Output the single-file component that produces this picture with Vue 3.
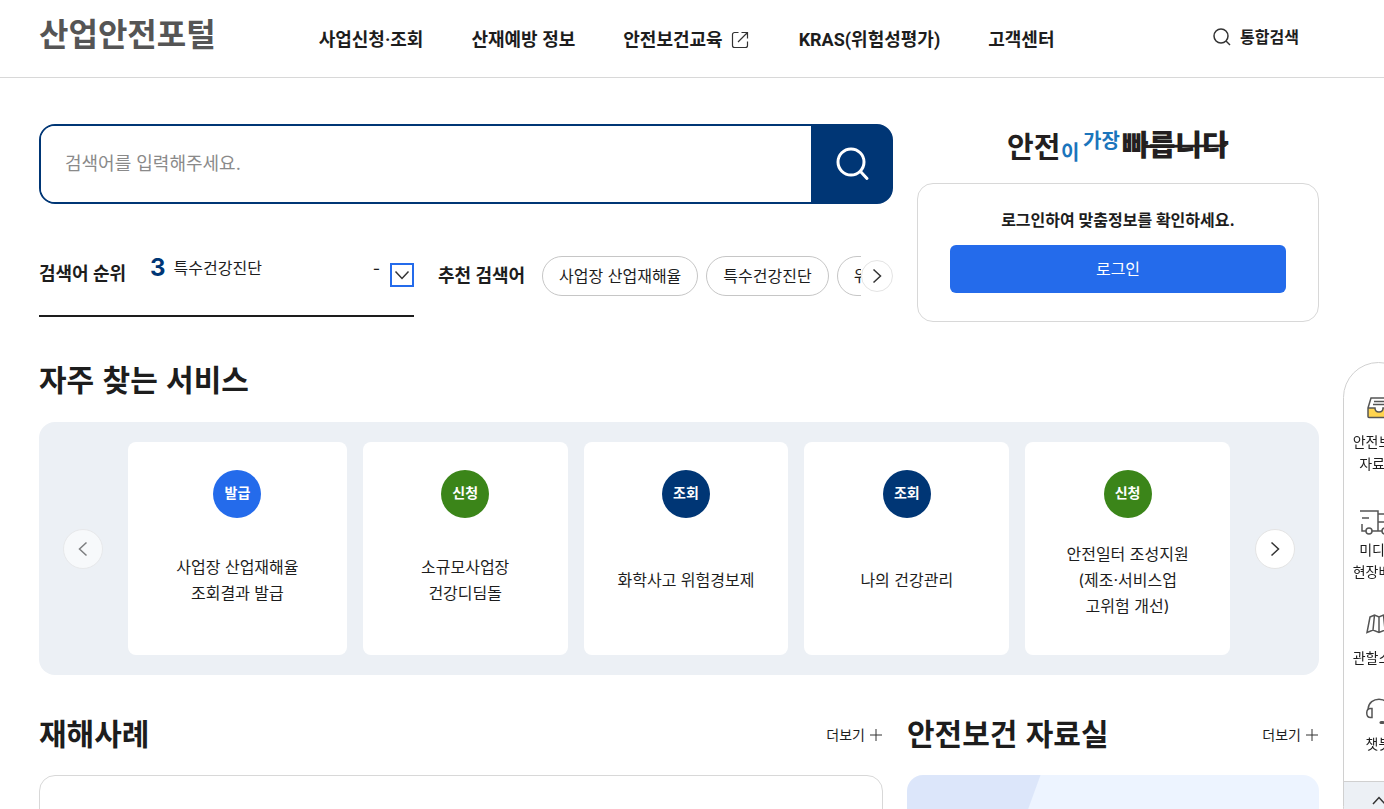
<template>
  <div class="page">
    <header class="header">
      <a class="logo" href="#">산업안전포털</a>
      <nav class="nav">
        <a v-for="item in menu" :key="item.label" href="#" class="nav-link">
          {{ item.label }}
          <svg v-if="item.external" width="20" height="20" viewBox="0 0 20 20" aria-hidden="true">
            <path d="M7.500 2.500H3.500A2 2 0 0 0 1.500 4.500V15.500A2 2 0 0 0 3.500 17.500H14.500A2 2 0 0 0 16.500 15.500V11.500M10.500 2.500H16.500V8.500M16.500 2.500L7 12" />
          </svg>
        </a>
      </nav>
      <button class="total-search" type="button">
        <svg width="20" height="20" viewBox="0 0 20 20" aria-hidden="true">
          <circle cx="9" cy="9" r="7" />
          <path d="M14 14L18 18" />
        </svg>
        통합검색
      </button>
    </header>

    <main class="main">
      <section class="top">
        <div class="top-left">
          <form class="search" @submit.prevent>
            <input v-model="keyword" type="text" placeholder="검색어를 입력해주세요." aria-label="검색어" />
            <button type="submit" aria-label="검색">
              <svg width="40" height="40" viewBox="0 0 40 40" aria-hidden="true">
                <circle cx="20" cy="18" r="13" />
                <path d="M29.500 27.500L36 34.500" />
              </svg>
            </button>
          </form>
          <div class="keywords">
            <div class="rank">
              <strong class="rank-title">검색어 순위</strong>
              <div class="rank-item">
                <b>3</b>
                <a href="#">특수건강진단</a>
                <span>-</span>
              </div>
              <button class="rank-toggle" type="button" aria-label="순위 펼치기">
                <svg width="20" height="20" viewBox="0 0 20 20" aria-hidden="true"><path d="M3.500 6.500L10 13.500L16.500 6.500" /></svg>
              </button>
            </div>
            <div class="recommend">
              <strong>추천 검색어</strong>
              <div class="chips">
                <a v-for="chip in chips" :key="chip" href="#" class="chip">{{ chip }}</a>
              </div>
              <button class="round small" type="button" aria-label="다음 검색어">
                <svg width="20" height="20" viewBox="0 0 20 20" aria-hidden="true"><path d="M6.500 3.500L13.500 10L6.500 16.500" /></svg>
              </button>
            </div>
          </div>
        </div>

        <div class="top-right">
          <svg class="slogan" width="222" height="36" viewBox="0 0 222 36" role="img" aria-label="안전이 가장 빠릅니다">
            <text class="black" x="0" y="30" font-size="29">안전</text>
            <text class="blue" x="54" y="32" font-size="20">이</text>
            <text class="blue" x="76" y="20" font-size="20">가장</text>
            <text class="black heavy" x="115" y="28" font-size="29">빠릅니다</text>
            <path d="M138 17L221 16.500L218 19L138 20Z" />
          </svg>
          <div class="login">
            <p>로그인하여 맞춤정보를 확인하세요.</p>
            <button type="button">로그인</button>
          </div>
        </div>
      </section>

      <section class="services">
        <h2>자주 찾는 서비스</h2>
        <div class="slider">
          <button class="round" type="button" disabled aria-label="이전">
            <svg width="20" height="20" viewBox="0 0 20 20" aria-hidden="true"><path d="M13.500 3.500L6.500 10L13.500 16.500" /></svg>
          </button>
          <div class="cards">
            <a v-for="service in services" :key="service.lines[0]" href="#" class="card">
              <span class="badge" :class="service.type">{{ service.badge }}</span>
              <span class="card-text">
                <span v-for="line in service.lines" :key="line">{{ line }}</span>
              </span>
            </a>
          </div>
          <button class="round" type="button" aria-label="다음">
            <svg width="20" height="20" viewBox="0 0 20 20" aria-hidden="true"><path d="M6.500 3.500L13.500 10L6.500 16.500" /></svg>
          </button>
        </div>
      </section>

      <div class="boards">
        <section v-for="board in boards" :key="board.title">
          <div class="board-head">
            <h2>{{ board.title }}</h2>
            <a href="#" class="more">
              더보기
              <svg width="14" height="14" viewBox="0 0 14 14" aria-hidden="true"><path d="M7 1V13M1 7H13" /></svg>
            </a>
          </div>
          <div class="board-box" :class="board.type"></div>
        </section>
      </div>
    </main>

    <aside class="quick">
      <div class="quick-list">
        <a href="#">
          <svg width="32" height="32" viewBox="0 0 32 32" aria-hidden="true">
            <path class="yellow" d="M5 16H12C12 19 14 20 16 20S20 19 20 16H27V25H5Z" />
            <path d="M5 16L8 6H24L27 16V24.500Q27 25.500 26 25.500H6Q5 25.500 5 24.500ZM5 16H12C12 19 14 20 16 20S20 19 20 16H27M11 9.500H21M10 12.500H22" />
          </svg>
          <span>안전보건</span><span>자료실</span>
        </a>
        <a href="#">
          <svg width="40" height="32" viewBox="0 0 40 32" aria-hidden="true">
            <path d="M1 11H19V31H13M3 18H10M3 24V31H7M19 14H28L34 22V31H29M19 22H33M19 31H23" />
            <circle cx="10" cy="31" r="3" />
            <circle cx="26" cy="31" r="3" />
          </svg>
          <span>미디어</span><span>현장배송</span>
        </a>
        <a href="#">
          <svg width="32" height="32" viewBox="0 0 32 32" aria-hidden="true">
            <path d="M7 9L11.500 7L16 9L20.500 7L25 9L28 23.500L22 22L16 24.500L10 22L4 24.500ZM11.500 7L10 22M16 9V24.500M20.500 7L22 22" />
          </svg>
          <span>관할소속</span>
        </a>
        <a href="#">
          <svg width="32" height="32" viewBox="0 0 32 32" aria-hidden="true">
            <path d="M5 15C6 2 26 2 27 15M7.500 14.500C2.500 14.500 2.500 23.500 7.500 23.500H9V14.500ZM24.500 14.500C29.500 14.500 29.500 23.500 24.500 23.500H23V14.500ZM26 23.500Q25 28.500 20 28.500" />
            <path class="mic" d="M18 28.500H20" />
          </svg>
          <span>챗봇</span>
        </a>
      </div>
      <button class="to-top" type="button" aria-label="맨 위로">
        <svg width="20" height="20" viewBox="0 0 20 20" aria-hidden="true"><path d="M4 13L10 6.500L16 13" /></svg>
      </button>
    </aside>
  </div>
</template>

<script setup>
import { ref } from 'vue';

const keyword = ref('');

const menu = [
  { label: '사업신청·조회' },
  { label: '산재예방 정보' },
  { label: '안전보건교육', external: true },
  { label: 'KRAS(위험성평가)' },
  { label: '고객센터' }
];

const chips = ['사업장 산업재해율', '특수건강진단', '위험성평가'];

const services = [
  { badge: '발급', type: 'issue', lines: ['사업장 산업재해율', '조회결과 발급'] },
  { badge: '신청', type: 'apply', lines: ['소규모사업장', '건강디딤돌'] },
  { badge: '조회', type: 'view', lines: ['화학사고 위험경보제'] },
  { badge: '조회', type: 'view', lines: ['나의 건강관리'] },
  { badge: '신청', type: 'apply', lines: ['안전일터 조성지원', '(제조·서비스업', '고위험 개선)'] }
];

const boards = [
  { title: '재해사례', type: 'outline' },
  { title: '안전보건 자료실', type: 'filled' }
];
</script>

<style>
body {
  margin: 0;
}
</style>

<style scoped>
.page {
  height: 100vh;
  overflow: hidden;
  background: #fff;
  color: #1d1d1d;
  font-family: Inter, "Noto Sans CJK KR", sans-serif;
  font-size: 16px;
  line-height: 26px;
}
.page * {
  box-sizing: border-box;
}
a {
  color: inherit;
  text-decoration: none;
}
button, input {
  font: inherit;
  color: inherit;
}
button {
  padding: 0;
  border: 0;
  cursor: pointer;
}
svg {
  display: block;
  flex: none;
  fill: none;
  stroke: #333;
  stroke-width: 1.5;
}
h2 {
  margin: 0;
  font-family: "Liberation Sans", "Noto Sans CJK KR", sans-serif;
  font-size: 30px;
  line-height: 40px;
  font-weight: 700;
}
.header {
  display: flex;
  align-items: center;
  height: 78px;
  padding: 0 85px 0 39px;
  border-bottom: 1px solid #d8d8d8;
}
.logo {
  padding-bottom: 8px;
  font-size: 32px;
  line-height: 40px;
  font-weight: 700;
  color: #555;
}
.nav {
  display: flex;
  gap: 48px;
  flex: 1;
  margin-left: 103px;
  padding-top: 2px;
  font-family: Roboto, "Noto Sans CJK KR", sans-serif;
  font-size: 18px;
  font-weight: 700;
  white-space: nowrap;
}
.nav-link {
  display: flex;
  align-items: center;
  gap: 8px;
}
.nav-link svg {
  stroke-width: 1.2;
}
.total-search {
  display: flex;
  align-items: center;
  gap: 8px;
  padding-bottom: 4px;
  background: none;
  font-weight: 700;
}
.main {
  padding: 46px 65px 0 39px;
}
.top {
  display: flex;
  gap: 24px;
}
.top-left {
  flex: 1;
  min-width: 0;
}
.search {
  display: flex;
  height: 80px;
  border: 2px solid #003675;
  border-radius: 16px;
  background: linear-gradient(to left, #003675 40px, #fff 40px);
  overflow: hidden;
}
.search input {
  flex: 1;
  min-width: 0;
  padding: 0 24px;
  border: 0;
  outline: none;
  font-size: 18px;
}
.search input::placeholder {
  color: #8a8a8a;
}
.search button {
  display: flex;
  align-items: center;
  justify-content: center;
  width: 80px;
  background: #003675;
}
.search svg {
  stroke: #fff;
  stroke-width: 3;
  stroke-linecap: round;
}
.keywords {
  display: flex;
  gap: 24px;
  margin-top: 31px;
}
.rank {
  display: flex;
  align-items: center;
  flex: none;
  width: 375px;
  height: 82px;
  border-bottom: 2px solid #1d1d1d;
}
.rank-title {
  padding-bottom: 2px;
  font-size: 18px;
}
.rank-item {
  display: flex;
  align-items: center;
  gap: 8px;
  flex: 1;
  padding: 0 10px 14px 24px;
}
.rank-item b {
  font-size: 24px;
  color: #003675;
}
.rank-item span {
  margin-left: auto;
}
.rank-toggle {
  display: flex;
  align-items: center;
  justify-content: center;
  width: 24px;
  height: 24px;
  background: #fff;
  border: 2px solid #246beb;
}
.recommend {
  display: flex;
  align-items: center;
  flex: 1;
  min-width: 0;
}
.recommend strong {
  flex: none;
  margin-right: 17px;
  font-size: 18px;
}
.chips {
  display: flex;
  gap: 8px;
  flex: 1;
  min-width: 0;
  overflow: hidden;
}
.chip {
  flex: none;
  padding: 6px 16px;
  border: 1px solid #c6c6c6;
  border-radius: 20px;
}
.round {
  display: flex;
  align-items: center;
  justify-content: center;
  flex: none;
  width: 40px;
  height: 40px;
  background: #fff;
  border: 1px solid #e4e4e4;
  border-radius: 50%;
}
.round:disabled {
  opacity: 0.6;
  cursor: default;
}
.round.small {
  width: 32px;
  height: 32px;
}
.top-right {
  width: 402px;
}
.slogan {
  margin: 4px auto 19px;
  stroke: none;
  font-weight: 700;
  overflow: visible;
}
.slogan .black, .slogan path {
  fill: #231f20;
}
.slogan .heavy {
  font-weight: 900;
}
.slogan .blue {
  fill: #1b75bc;
}
.login {
  padding: 23px 32px 28px;
  border: 1px solid #d8d8d8;
  border-radius: 16px;
  text-align: center;
}
.login p {
  margin: 0 0 12px;
  font-weight: 700;
}
.login button {
  width: 100%;
  height: 48px;
  background: #246beb;
  border-radius: 6px;
  color: #fff;
}
.services {
  margin-top: 39px;
}
.slider {
  display: flex;
  align-items: center;
  gap: 25px;
  margin-top: 21px;
  padding: 20px 24px;
  background: #ecf0f5;
  border-radius: 16px;
}
.cards {
  display: grid;
  grid-template-columns: 219fr repeat(4, 205fr);
  gap: 16px;
  flex: 1;
}
.card {
  display: flex;
  flex-direction: column;
  align-items: center;
  min-height: 213px;
  padding: 28px 16px 14px;
  background: #fff;
  border-radius: 8px;
}
.badge {
  width: 48px;
  height: 48px;
  border-radius: 50%;
  color: #fff;
  font-size: 14px;
  line-height: 46px;
  font-weight: 700;
  text-align: center;
}
.badge.issue {
  background: #246beb;
}
.badge.apply {
  background: #3b8519;
}
.badge.view {
  background: #003675;
}
.card-text {
  display: flex;
  flex-direction: column;
  justify-content: center;
  flex: 1;
  text-align: center;
}
.boards {
  display: grid;
  grid-template-columns: 844fr 412fr;
  gap: 24px;
  margin-top: 40px;
}
.board-head {
  display: flex;
  align-items: center;
  justify-content: space-between;
}
.more {
  display: flex;
  align-items: center;
  gap: 4px;
  font-size: 14px;
}
.more svg {
  stroke-width: 1;
}
.board-box {
  height: 320px;
  margin-top: 20px;
  border-radius: 16px;
}
.board-box.outline {
  border: 1px solid #d8d8d8;
}
.board-box.filled {
  background: linear-gradient(110deg, #dce6fa 0 125px, #edf4ff 126px);
}
.quick {
  position: fixed;
  top: 362px;
  right: -30px;
  width: 71px;
  border: 1px solid #d0d0d0;
  border-radius: 36px;
  background: #fff;
  overflow: hidden;
  font-size: 14px;
  line-height: 22px;
}
.quick-list {
  display: flex;
  flex-direction: column;
  gap: 25px;
  padding: 29px 0 26px;
}
.quick-list a {
  display: flex;
  flex-direction: column;
  align-items: center;
}
.quick-list svg {
  margin-bottom: 7px;
  stroke: #555;
  overflow: visible;
}
.quick-list .yellow {
  fill: #ffd44f;
  stroke: none;
}
.quick-list .mic {
  stroke-width: 3;
  stroke-linecap: round;
}
.to-top {
  display: flex;
  justify-content: center;
  width: 100%;
  height: 60px;
  padding-top: 9px;
  background: #ecf0f5;
  border-top: 1px solid #d0d0d0;
}
</style>
